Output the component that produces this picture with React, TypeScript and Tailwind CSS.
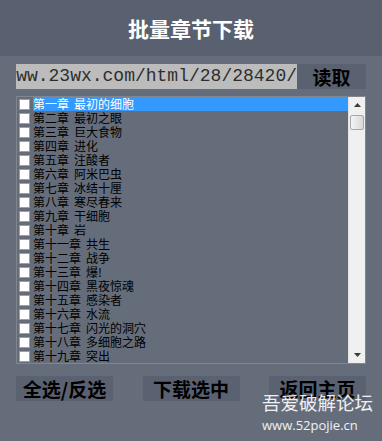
import React from 'react';

const CHAPTERS = [
  ['第一章', '最初的细胞'],
  ['第二章', '最初之眼'],
  ['第三章', '巨大食物'],
  ['第四章', '进化'],
  ['第五章', '注酸者'],
  ['第六章', '阿米巴虫'],
  ['第七章', '冰结十厘'],
  ['第八章', '寒尽春来'],
  ['第九章', '干细胞'],
  ['第十章', '岩'],
  ['第十一章', '共生'],
  ['第十二章', '战争'],
  ['第十三章', '爆!'],
  ['第十四章', '黑夜惊魂'],
  ['第十五章', '感染者'],
  ['第十六章', '水流'],
  ['第十七章', '闪光的洞穴'],
  ['第十八章', '多细胞之路'],
  ['第十九章', '突出'],
];

const CJK = { fontFamily: '"Noto Sans CJK SC", sans-serif' };

function ScrollArrow({ up }: { up?: boolean }) {
  return (
    <div className="h-[16px] flex items-center justify-center">
      <svg width="7" height="4" viewBox="0 0 7 4">
        <path d={up ? 'M0 4 L3.5 0 L7 4 Z' : 'M0 0 L7 0 L3.5 4 Z'} fill="#3a3a3a" />
      </svg>
    </div>
  );
}

export default function App() {
  return (
    <div className="w-[382px] h-[441px] bg-[#656d7a] relative overflow-hidden" style={CJK}>
      {/* Title */}
      <div className="h-[56px] bg-[#596170] flex items-center justify-center">
        <h1 className="text-white font-bold text-[21px] leading-none">批量章节下载</h1>
      </div>

      <div className="px-[16px]">
        {/* URL row */}
        <div className="mt-[8px] h-[25px] flex">
          <div
            className="w-[281px] bg-[#bcbcbc] overflow-hidden flex justify-end items-center whitespace-nowrap text-[18px] text-[#2e2e2e]"
            style={{ fontFamily: '"Liberation Mono", monospace' }}
          >
            www.23wx.com/html/28/28420/
          </div>
          <button className="flex-1 bg-[#5a6170] text-black font-bold text-[19px] leading-none">读取</button>
        </div>

        {/* Chapter list */}
        <div className="mt-[7px] h-[268px] border border-[#80858e] flex">
          <div className="flex-1 pl-[2px]">
            {CHAPTERS.map(([no, name], i) => (
              <div key={no} className="h-[14px] flex items-center">
                <span className="w-[11px] h-[11px] bg-white border border-[#9aa0a8] shrink-0" />
                <span
                  className={`ml-[3px] flex-1 h-[14px] flex items-center text-[12px] leading-[14px] whitespace-nowrap ${
                    i === 0 ? 'bg-[#3399ff] text-white' : 'text-black'
                  }`}
                >
                  <span>{no}</span>
                  <span className="ml-[5px]">{name}</span>
                </span>
              </div>
            ))}
          </div>
          <div className="w-[17px] bg-[#f0f0f0] border-l border-[#e4e4e4] flex flex-col">
            <ScrollArrow up />
            <div className="mx-[1px] mt-[2px] h-[15px] bg-gradient-to-r from-[#f4f4f4] to-[#d8d8d8] border border-[#a8a8a8] rounded-[2px]" />
            <div className="flex-1" />
            <ScrollArrow />
          </div>
        </div>

        {/* Bottom buttons */}
        <div className="mt-[12px] h-[25px] flex justify-between">
          {['全选/反选', '下载选中', '返回主页'].map((t) => (
            <button key={t} className="w-[97px] bg-[#5a6170] text-black font-bold text-[19px] leading-none">
              {t}
            </button>
          ))}
        </div>
      </div>

      {/* Watermark */}
      <div className="absolute left-[262px] top-[393px] text-white/90 leading-none">
        <div className="text-[18.5px]">吾爱破解论坛</div>
        <div className="mt-[7px] text-[13px]" style={{ fontFamily: '"Open Sans", sans-serif' }}>www.52pojie.cn</div>
      </div>
    </div>
  );
}
